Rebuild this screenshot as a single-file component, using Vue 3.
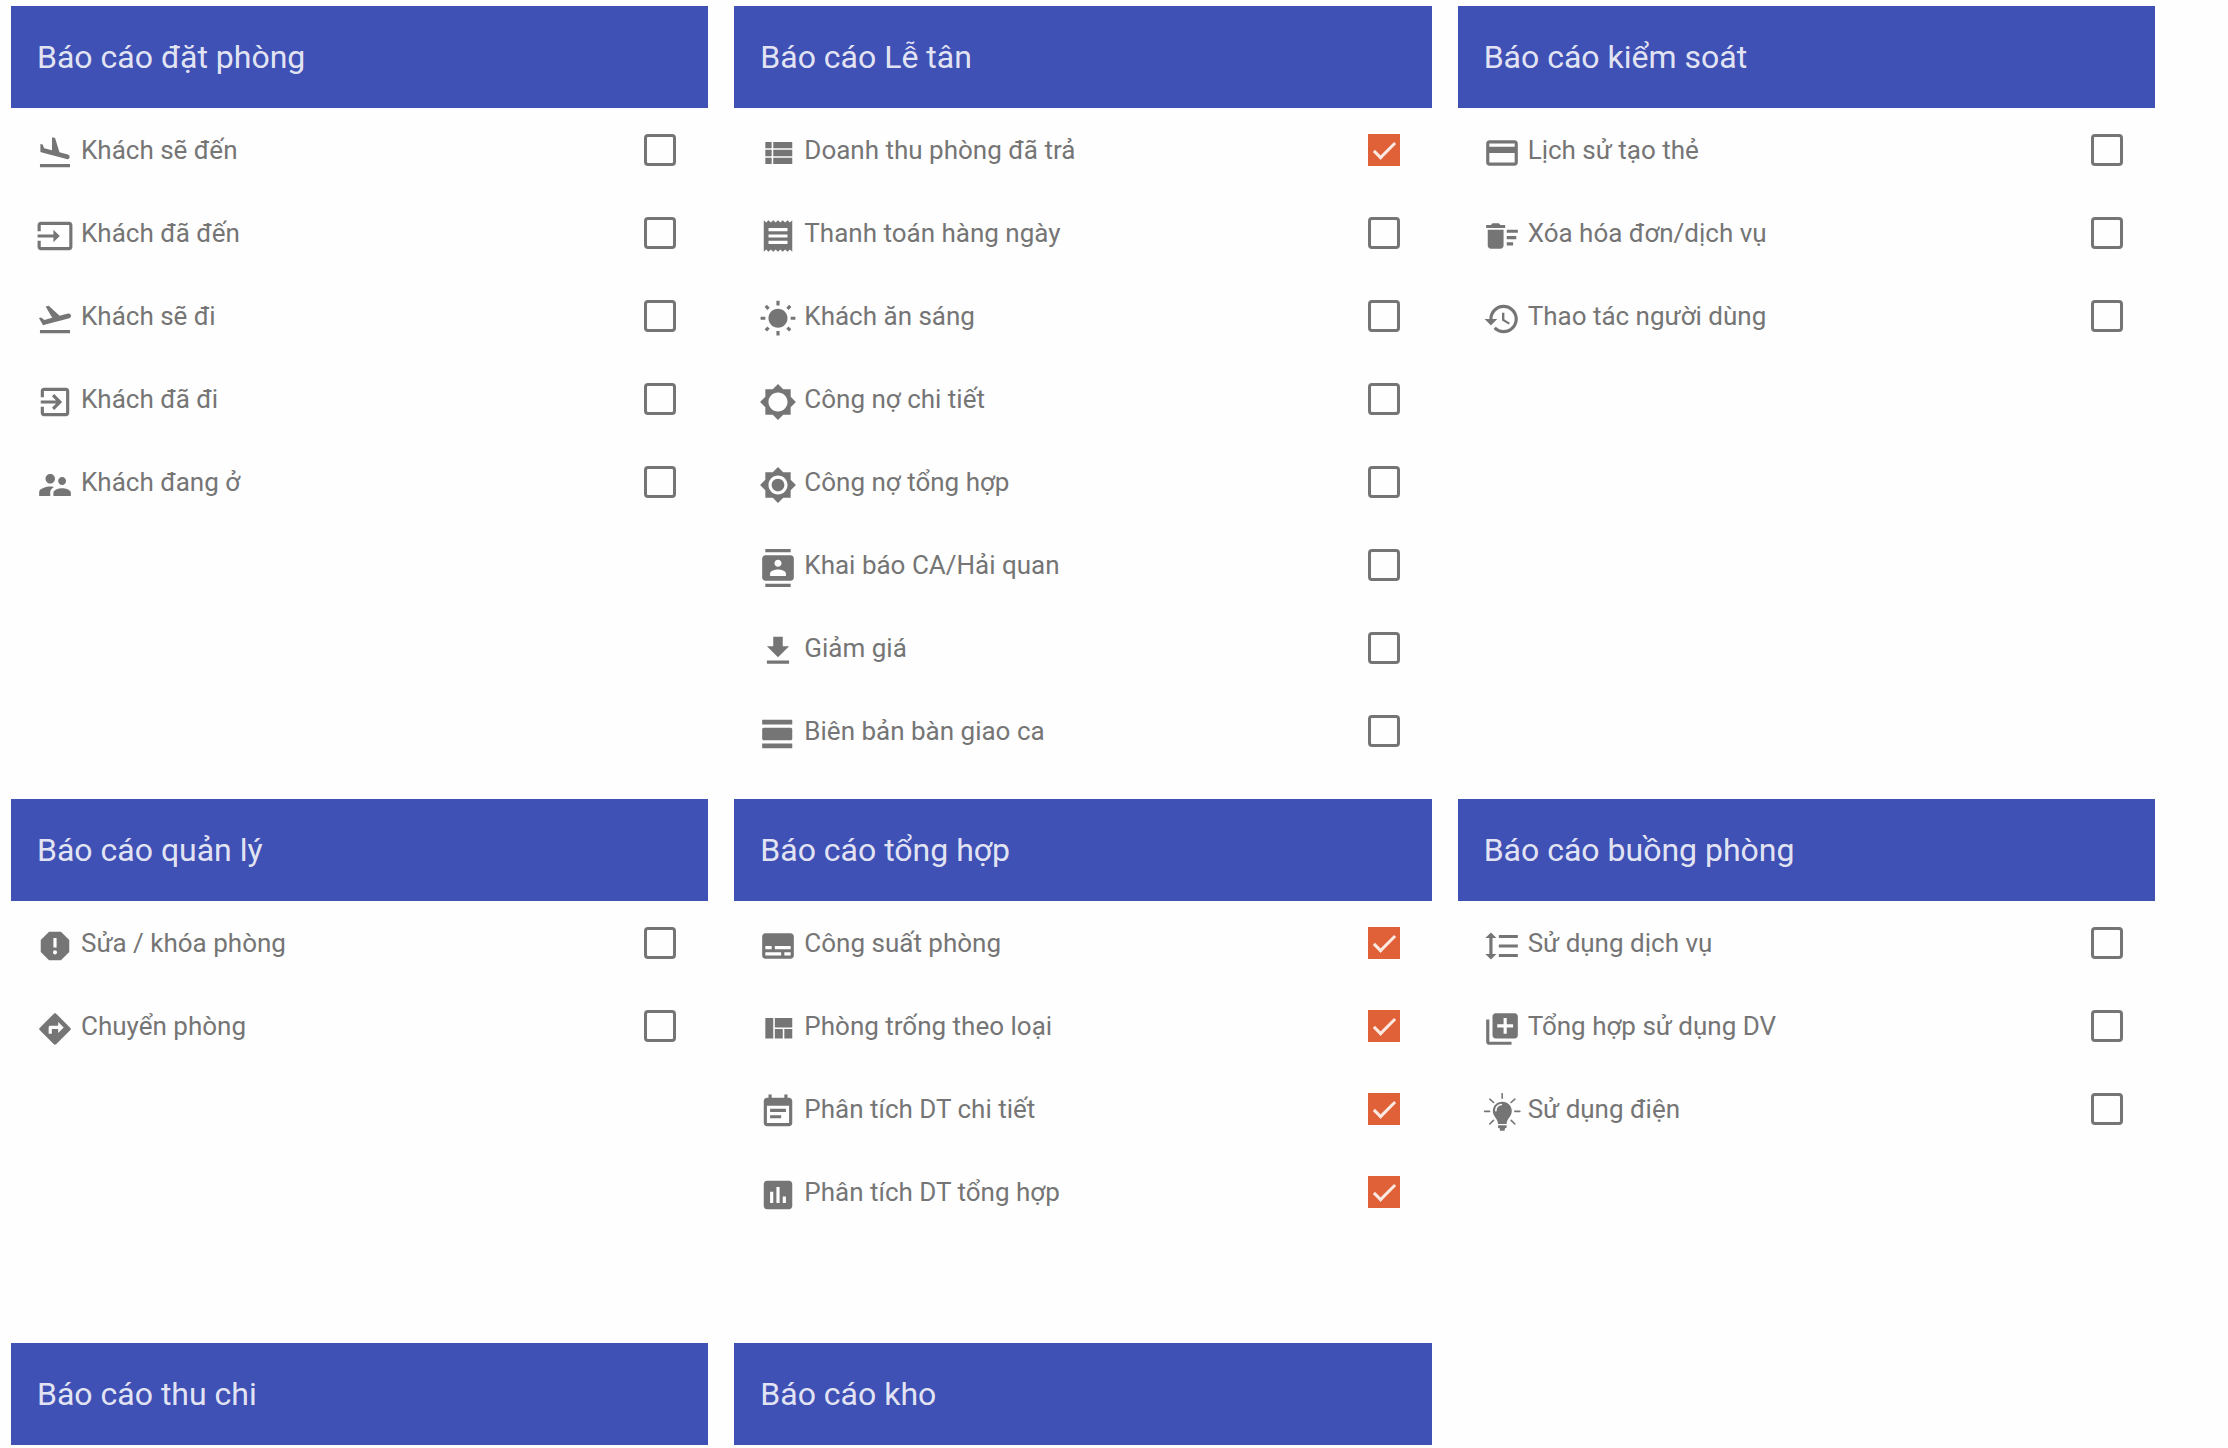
<template>
  <div class="reports">
    <section class="group" v-for="group in groups" :key="group.title">
      <h2 class="title">{{ group.title }}</h2>
      <ul class="list" v-if="group.items.length">
        <li v-for="item in group.items" :key="item.id">
          <label class="item" :for="item.id">
            <svg class="icon" viewBox="0 0 24 24" aria-hidden="true">
              <path :d="icons[item.icon]" />
              <path v-if="item.icon === 'bulb'" class="rays" :d="bulbRays" />
              <path v-if="item.icon === 'bulb'" class="shine" :d="bulbShine" />
            </svg>
            <span class="name">{{ item.name }}</span>
            <input class="check" type="checkbox" :id="item.id" v-model="item.checked" />
          </label>
        </li>
      </ul>
    </section>
  </div>
</template>

<script setup>
import { reactive } from 'vue';

const icons = {
  land: 'M2.5 19h19v2h-19zm7.18-5.73l4.35 1.16 5.31 1.42c.8.21 1.62-.26 1.84-1.06.21-.8-.26-1.62-1.06-1.84l-5.31-1.42-2.76-9.02L10.12 2v8.28L5.15 8.95l-.93-2.32-1.45-.39v5.17l1.6.43 5.31 1.43z',
  takeoff: 'M2.5 19h19v2h-19zm19.57-9.36c-.21-.8-1.04-1.28-1.84-1.06L14.92 10l-6.9-6.43-1.93.51 4.14 7.17-4.97 1.33-1.97-1.54-1.45.39 1.82 3.16.77 1.33 1.6-.43 5.31-1.42 4.35-1.16L21 11.49c.81-.23 1.28-1.05 1.07-1.85z',
  input: 'M21 3.01H3c-1.1 0-2 .9-2 2V9h2V4.99h18v14.03H3V15H1v4.01c0 1.1.9 1.98 2 1.98h18c1.1 0 2-.88 2-1.98v-14c0-1.11-.9-2-2-2zM11 16l4-4-4-4v3H1v2h10v3z',
  exit: 'M10.09 15.59L11.5 17l5-5-5-5-1.41 1.41L12.67 11H3v2h9.67l-2.58 2.59zM19 3H5c-1.11 0-2 .9-2 2v4h2V5h14v14H5v-4H3v4c0 1.1.89 2 2 2h14c1.1 0 2-.9 2-2V5c0-1.1-.9-2-2-2z',
  people: 'M16.5 12c1.38 0 2.49-1.12 2.49-2.5S17.88 7 16.5 7C15.12 7 14 8.12 14 9.5s1.12 2.5 2.5 2.5zM9 11c1.66 0 2.99-1.34 2.99-3S10.66 5 9 5C7.34 5 6 6.34 6 8s1.34 3 3 3zm7.5 3c-1.83 0-5.5.92-5.5 2.75V19h11v-2.25c0-1.83-3.67-2.75-5.5-2.75zM9 13c-2.33 0-7 1.17-7 3.5V19h7v-2.25c0-.85.33-2.34 2.37-3.47C10.5 13.1 9.66 13 9 13z',
  list: 'M4 14h4v-4H4v4zm0 5h4v-4H4v4zM4 9h4V5H4v4zm5 5h12v-4H9v4zm0 5h12v-4H9v4zM9 5v4h12V5H9z',
  receipt: 'M18 17H6v-2h12v2zm0-4H6v-2h12v2zm0-4H6V7h12v2zM3 22l1.5-1.5L6 22l1.5-1.5L9 22l1.5-1.5L12 22l1.5-1.5L15 22l1.5-1.5L18 22l1.5-1.5L21 22V2l-1.5 1.5L18 2l-1.5 1.5L15 2l-1.5 1.5L12 2l-1.5 1.5L9 2 7.5 3.5 6 2 4.5 3.5 3 2v20z',
  sunny: 'M6.76 4.84l-1.8-1.79-1.41 1.41 1.79 1.79 1.42-1.41zM4 10.5H1v2h3v-2zm9-9.95h-2V3.5h2V.55zm7.45 3.91l-1.41-1.41-1.79 1.79 1.41 1.41 1.79-1.79zm-3.21 13.7l1.79 1.8 1.41-1.41-1.8-1.79-1.4 1.4zM20 10.5v2h3v-2h-3zm-8-5c-3.31 0-6 2.69-6 6s2.69 6 6 6 6-2.69 6-6-2.69-6-6-6zm-1 16.95h2V19.5h-2v2.95zm-7.45-3.91l1.41 1.41 1.79-1.8-1.41-1.41-1.79 1.8z',
  brightness: 'M20 15.31L23.31 12 20 8.69V4h-4.69L12 .69 8.69 4H4v4.69L.69 12 4 15.31V20h4.69L12 23.31 15.31 20H20v-4.69zM12 18c-3.31 0-6-2.69-6-6s2.69-6 6-6 6 2.69 6 6-2.69 6-6 6z',
  brightnessFull: 'M20 15.31L23.31 12 20 8.69V4h-4.69L12 .69 8.69 4H4v4.69L.69 12 4 15.31V20h4.69L12 23.31 15.31 20H20v-4.69zM12 18c-3.31 0-6-2.69-6-6s2.69-6 6-6 6 2.69 6 6-2.69 6-6 6zm0-10c-2.21 0-4 1.79-4 4s1.79 4 4 4 4-1.79 4-4-1.79-4-4-4z',
  contacts: 'M20 0H4v2h16V0zM4 24h16v-2H4v2zM20 4H4c-1.1 0-2 .9-2 2v12c0 1.1.9 2 2 2h16c1.1 0 2-.9 2-2V6c0-1.1-.9-2-2-2zm-8 2.75c1.24 0 2.25 1.01 2.25 2.25s-1.01 2.25-2.25 2.25S9.75 10.24 9.75 9 10.76 6.75 12 6.75zM17 17H7v-1.5c0-1.67 3.33-2.5 5-2.5s5 .83 5 2.5V17z',
  download: 'M19 9h-4V3H9v6H5l7 7 7-7zM5 18v2h14v-2H5z',
  day: 'M2 21h19v-3H2v3zM20 8H3c-.55 0-1 .45-1 1v6c0 .55.45 1 1 1h17c.55 0 1-.45 1-1V9c0-.55-.45-1-1-1zM2 3v3h19V3H2z',
  card: 'M20 4H4c-1.11 0-1.99.89-1.99 2L2 18c0 1.11.89 2 2 2h16c1.11 0 2-.89 2-2V6c0-1.11-.89-2-2-2zm0 14H4v-6h16v6zm0-10H4V6h16v2z',
  sweep: 'M15 16h4v2h-4zm0-8h7v2h-7zm0 4h6v2h-6zM3 18c0 1.1.9 2 2 2h6c1.1 0 2-.9 2-2V8H3v10zM14 5h-3l-1-1H6L5 5H2v2h12z',
  history: 'M13 3c-4.97 0-9 4.03-9 9H1l3.89 3.89.07.14L9 12H6c0-3.87 3.13-7 7-7s7 3.13 7 7-3.13 7-7 7c-1.93 0-3.68-.79-4.94-2.06l-1.42 1.42C8.27 19.99 10.51 21 13 21c4.97 0 9-4.03 9-9s-4.03-9-9-9zm-1 5v5l4.28 2.54.72-1.21-3.5-2.08V8H12z',
  report: 'M15.73 3H8.27L3 8.27v7.46L8.27 21h7.46L21 15.73V8.27L15.73 3zM12 17.3c-.72 0-1.3-.58-1.3-1.3 0-.72.58-1.3 1.3-1.3.72 0 1.3.58 1.3 1.3 0 .72-.58 1.3-1.3 1.3zm1-4.3h-2V7h2v6z',
  directions: 'M21.71 11.29l-9-9c-.39-.39-1.02-.39-1.41 0l-9 9c-.39.39-.39 1.02 0 1.41l9 9c.39.39 1.02.39 1.41 0l9-9c.39-.38.39-1.01 0-1.41zM14 14.5V12h-4v3H8v-4c0-.55.45-1 1-1h5V7.5l3.5 3.5-3.5 3.5z',
  subtitles: 'M20 4H4c-1.1 0-2 .9-2 2v12c0 1.1.9 2 2 2h16c1.1 0 2-.9 2-2V6c0-1.1-.9-2-2-2zM4 12h4v2H4v-2zm10 6H4v-2h10v2zm6 0h-4v-2h4v2zm0-4H10v-2h10v2z',
  quilt: 'M10 18h5v-6h-5v6zm-6 0h5V5H4v13zm12 0h5v-6h-5v6zM10 5v6h11V5H10z',
  note: 'M17 10H7v2h10v-2zm2-7h-1V1h-2v2H8V1H6v2H5c-1.11 0-1.99.9-1.99 2L3 19c0 1.1.89 2 2 2h14c1.1 0 2-.9 2-2V5c0-1.1-.9-2-2-2zm0 16H5V8h14v11zm-5-5H7v2h7v-2z',
  chart: 'M19 3H5c-1.1 0-2 .9-2 2v14c0 1.1.9 2 2 2h14c1.1 0 2-.9 2-2V5c0-1.1-.9-2-2-2zM9 17H7v-7h2v7zm4 0h-2V7h2v10zm4 0h-2v-4h2v4z',
  spacing: 'M6 7h2.5L5 3.5 1.5 7H4v10H1.5L5 20.5 8.5 17H6V7zm4-2v2h12V5H10zm0 14h12v-2H10v2zm0-6h12v-2H10v2z',
  add: 'M4 6H2v14c0 1.1.9 2 2 2h14v-2H4V6zm16-4H8c-1.1 0-2 .9-2 2v12c0 1.1.9 2 2 2h12c1.1 0 2-.9 2-2V4c0-1.1-.9-2-2-2zm-1 9h-4v4h-2v-4H9V9h4V5h2v4h4v2z',
  bulb: 'M12.2 5.5c-3.4 0-6 2.6-6 5.9 0 3.3 3.1 4.8 3.3 8.1h5.4c.2-3.3 3.3-4.8 3.3-8.1 0-3.3-2.6-5.9-6-5.9zM9.5 20.3h5.4v1.6l-1 .4-.3 1.5h-2.8l-.3-1.5-1-.4z',
}
const bulbRays = 'M12.1.4v2.9M1 11.6h3.2M20.1 11.6h3.2M4.3 3.9l2.4 2.1M20.1 3.9l-2.4 2.1M4.3 19.6l2.3-2.3M20.1 19.6l-2.3-2.3'
const bulbShine = 'M8.1 11.2c0-2.2 1.4-3.6 3.5-3.9'

let count = 0
const item = (icon, name, checked = false) => ({ id: `report-${++count}`, icon, name, checked })

const groups = reactive([
  {
    title: 'Báo cáo đặt phòng',
    items: [
      item('land', 'Khách sẽ đến'),
      item('input', 'Khách đã đến'),
      item('takeoff', 'Khách sẽ đi'),
      item('exit', 'Khách đã đi'),
      item('people', 'Khách đang ở'),
    ],
  },
  {
    title: 'Báo cáo Lễ tân',
    items: [
      item('list', 'Doanh thu phòng đã trả', true),
      item('receipt', 'Thanh toán hàng ngày'),
      item('sunny', 'Khách ăn sáng'),
      item('brightness', 'Công nợ chi tiết'),
      item('brightnessFull', 'Công nợ tổng hợp'),
      item('contacts', 'Khai báo CA/Hải quan'),
      item('download', 'Giảm giá'),
      item('day', 'Biên bản bàn giao ca'),
    ],
  },
  {
    title: 'Báo cáo kiểm soát',
    items: [
      item('card', 'Lịch sử tạo thẻ'),
      item('sweep', 'Xóa hóa đơn/dịch vụ'),
      item('history', 'Thao tác người dùng'),
    ],
  },
  {
    title: 'Báo cáo quản lý',
    items: [
      item('report', 'Sửa / khóa phòng'),
      item('directions', 'Chuyển phòng'),
    ],
  },
  {
    title: 'Báo cáo tổng hợp',
    items: [
      item('subtitles', 'Công suất phòng', true),
      item('quilt', 'Phòng trống theo loại', true),
      item('note', 'Phân tích DT chi tiết', true),
      item('chart', 'Phân tích DT tổng hợp', true),
    ],
  },
  {
    title: 'Báo cáo buồng phòng',
    items: [
      item('spacing', 'Sử dụng dịch vụ'),
      item('add', 'Tổng hợp sử dụng DV'),
      item('bulb', 'Sử dụng điện'),
    ],
  },
  { title: 'Báo cáo thu chi', items: [] },
  { title: 'Báo cáo kho', items: [] },
])
</script>

<style>
body {
  margin: 0;
  background: #fefefe;
}
</style>

<style scoped>
.reports {
  display: grid;
  grid-template-columns: repeat(3, minmax(0, 1fr));
  gap: 26px;
  padding: 6px 73px 0 11px;
  font-family: Roboto, "Noto Sans", sans-serif;
  color: #757575;
}

.title {
  display: flex;
  align-items: center;
  height: 102px;
  margin: 0;
  padding: 0 26px;
  background: #3f51b5;
  color: rgba(255, 255, 255, 0.87);
  font-size: 32px;
  font-weight: 400;
}

.list {
  box-sizing: border-box;
  min-height: 416px;
  margin: 0;
  padding: 0 32px 1px 25px;
  list-style: none;
}

.item {
  display: flex;
  align-items: center;
  height: 83px;
  cursor: pointer;
}

.icon {
  flex: none;
  width: 38px;
  height: 38px;
  margin: 7px 7px 0 0;
  fill: currentColor;
}

.icon .rays,
.icon .shine {
  fill: none;
  stroke: currentColor;
  stroke-width: 1;
  stroke-linecap: round;
}

.icon .shine {
  stroke: #fefefe;
}

.name {
  flex: 1;
  padding-top: 2px;
  font-size: 26px;
  line-height: 31px;
}

.check {
  appearance: none;
  position: relative;
  flex: none;
  box-sizing: border-box;
  width: 32px;
  height: 32px;
  margin: 0;
  border: 3px solid #757575;
  border-radius: 4px;
  cursor: pointer;
}

.check:checked {
  border: 0;
  border-radius: 0;
  background: #e06038;
}

.check:checked::after {
  content: "";
  position: absolute;
  top: 3px;
  left: 11px;
  box-sizing: border-box;
  width: 11px;
  height: 22px;
  border: solid #fbe9e2;
  border-width: 0 3px 3px 0;
  transform: rotate(45deg);
}
</style>
